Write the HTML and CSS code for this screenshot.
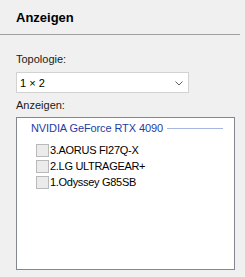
FILE: index.html
```html
<!doctype html>
<html lang="de">
  <head>
    <meta charset="UTF-8" />
    <meta name="viewport" content="width=device-width, initial-scale=1.0" />
    <title>Anzeigen</title>
    <link rel="stylesheet" href="styles.css">
  </head>
  <body>
    <div class="panel">
      <div class="header">Anzeigen</div>

      <div class="content">
        <label class="field-label">Topologie:</label>
        <div class="combo">
          <span class="combo-value">1 × 2</span>
          <svg class="chevron" width="8" height="5" viewBox="0 0 8 5">
            <path d="M0.5 0.5 L4 4 L7.5 0.5" fill="none" stroke="#606060" stroke-width="1" />
          </svg>
        </div>

        <label class="field-label">Anzeigen:</label>
        <div class="listbox">
          <div class="group-header">
            <span class="group-title">NVIDIA GeForce RTX 4090</span>
            <span class="group-line"></span>
          </div>
          <ul class="display-list">
            <li><span class="check"></span>3.AORUS FI27Q-X</li>
            <li><span class="check"></span>2.LG ULTRAGEAR+</li>
            <li><span class="check"></span>1.Odyssey G85SB</li>
          </ul>
        </div>
      </div>
    </div>
  </body>
</html>
```

FILE: styles.css
```css
* {
  margin: 0;
  padding: 0;
  box-sizing: border-box;
}

body {
  font-family: "Liberation Sans", Arial, sans-serif;
  font-size: 11px;
  background: #f0f0f0;
  color: #000;
}

.panel {
  width: 245px;
  height: 277px;
}

.header {
  width: 240px;
  height: 35px;
  padding: 10px 0 0 16px;
  font-size: 13px;
  font-weight: bold;
  border-bottom: 1px solid #a0a0a0;
}

.content {
  padding: 18px 10px 0 16px;
}

.field-label {
  display: block;
  line-height: 13px;
  color: #1a1a1a;
}

.combo {
  width: 173px;
  height: 21px;
  margin: 6px 0 6px;
  background: #fff;
  border: 1px solid #d2d2d2;
  display: flex;
  align-items: center;
  justify-content: space-between;
  padding: 0 5px 0 3px;
}

.chevron {
  margin-top: 1px;
}

.listbox {
  width: 219px;
  height: 153px;
  margin-top: 5px;
  background: #fff;
  border: 1px solid #828790;
  padding: 2px 11px 0 14px;
}

.group-header {
  display: flex;
  align-items: center;
  height: 16px;
  gap: 4px;
}

.group-title {
  color: #1f3ca6;
  letter-spacing: -0.1px;
  white-space: nowrap;
}

.group-line {
  flex: 1;
  height: 1px;
  background: #a7b7e2;
}

.display-list {
  list-style: none;
  margin-top: 6px;
  padding-left: 5px;
}

.display-list li {
  display: flex;
  align-items: center;
  height: 16px;
  letter-spacing: -0.3px;
}

.check {
  width: 13px;
  height: 13px;
  margin-right: 1px;
  background: #ebebeb;
  border: 1px solid #b9b9b9;
}
```
